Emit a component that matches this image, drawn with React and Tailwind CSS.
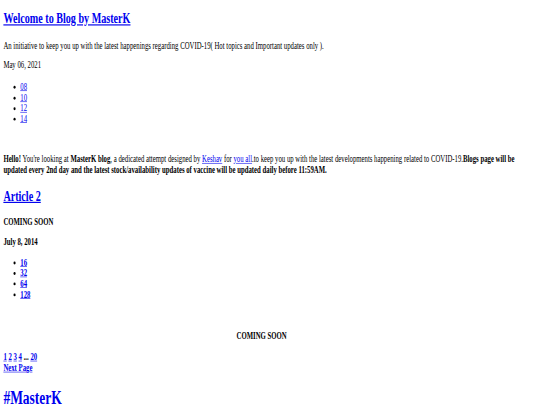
import React from 'react';

const link = 'text-[#0000ee] underline';

const Bullet = ({ children }) => (
  <li className="list-disc">{children}</li>
);

export default function App() {
  return (
    <div className="w-[540px] h-[405px] overflow-hidden bg-white">
      {/* page rendered at desktop size, then squeezed down like the screenshot */}
      <div className="w-[1280px] origin-top-left scale-x-[0.4219] scale-y-[0.58] px-2 text-[16px] leading-[1.15] text-black font-['Liberation_Serif','Times_New_Roman',serif]">
        <h1 className="mt-[11px] text-[24px] font-bold">
          <a href="#" className={link}>Welcome to Blog by MasterK</a>
        </h1>

        <p className="mt-[23.6px]">
          An initiative to keep you up with the latest happenings regarding COVID-19( Hot topics and Important updates only ).
        </p>
        <p className="mt-[15.3px]">May 06, 2021</p>

        <ul className="mt-[19px] pl-10">
          <Bullet><a href="#" className={link}>08</a></Bullet>
          <Bullet><a href="#" className={link}>10</a></Bullet>
          <Bullet><a href="#" className={link}>12</a></Bullet>
          <Bullet><a href="#" className={link}>14</a></Bullet>
        </ul>

        <p className="mt-[51px]">
          <b>Hello!</b> You're looking at <b>MasterK blog</b>, a dedicated attempt designed by{' '}
          <a href="#" className={link}>Keshav</a> for <a href="#" className={link}>you all</a>.to keep you up with the
          latest developments happening related to COVID-19.
          <b>Blogs page will be updated every 2nd day and the latest stock/availability updates of vaccine will be updated daily before 11:59AM.</b>
        </p>

        <h2 className="mt-[22.2px] text-[24px] font-bold">
          <a href="#" className={link}>Article 2</a>
        </h2>

        <h4 className="mt-[22px] font-bold">COMING SOON</h4>
        <p className="mt-[16.5px] font-bold">July 8, 2014</p>

        <ul className="mt-[16px] pl-10 font-bold">
          <Bullet><a href="#" className={link}>16</a></Bullet>
          <Bullet><a href="#" className={link}>32</a></Bullet>
          <Bullet><a href="#" className={link}>64</a></Bullet>
          <Bullet><a href="#" className={link}>128</a></Bullet>
        </ul>

        <p className="mt-[52.9px] w-[1224px] text-center font-bold">COMING SOON</p>

        <div className="mt-[18.6px] font-bold">
          <a href="#" className={link}>1</a> <a href="#" className={link}>2</a>{' '}
          <a href="#" className={link}>3</a> <a href="#" className={link}>4</a> ...{' '}
          <a href="#" className={link}>20</a>
          <br />
          <a href="#" className={link}>Next Page</a>
        </div>

        <h1 className="mt-[24.1px] text-[32px] font-bold">
          <a href="#" className={link}>#MasterK</a>
        </h1>
      </div>
    </div>
  );
}
